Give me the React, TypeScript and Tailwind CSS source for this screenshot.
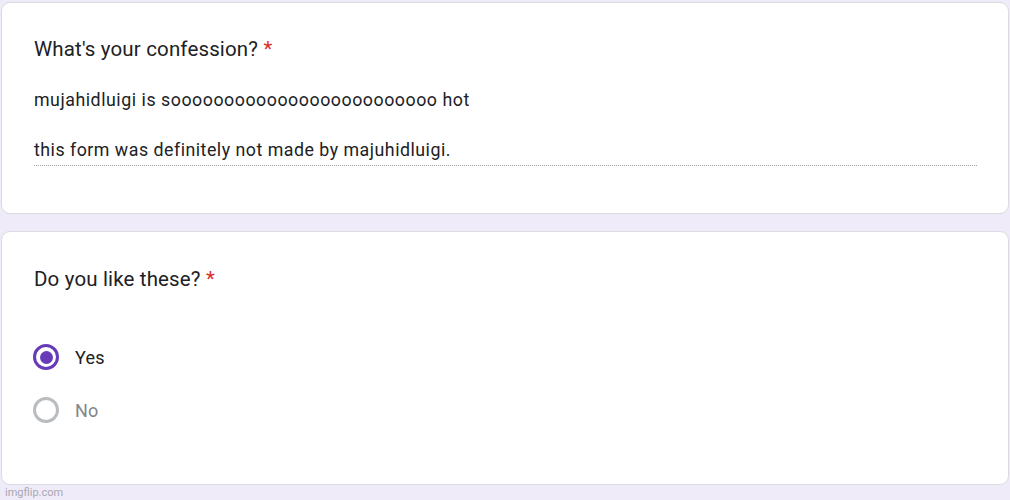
import React from "react";

export default function App() {
  return (
    <div
      className="w-[1010px] h-[500px] bg-[#f0ebf8] overflow-hidden flex flex-col pt-[2px] pl-[1px] pr-[1px]"
      style={{ fontFamily: "Roboto, 'Liberation Sans', sans-serif" }}
    >
      <div className="h-[212px] bg-white rounded-[9px] border border-[#dadce0] flex flex-col pl-[32px] pr-[31px] pt-[34px]">
        <div className="text-[20.5px] leading-[24px] text-[#202124] tracking-[0.15px]">
          What's your confession? <span className="text-[#d93025]">*</span>
        </div>
        <div className="mt-[28px] text-[17.8px] leading-[22px] text-[#202124] tracking-[0.53px]">
          mujahidluigi is sooooooooooooooooooooooooo hot
        </div>
        <div className="mt-[28px] text-[17.8px] leading-[22px] text-[#202124] tracking-[0.5px] pb-[4px] border-b border-dotted border-[#a0a0a0]">
          this form was definitely not made by majuhidluigi.
        </div>
      </div>
      <div className="mt-[17px] h-[254px] bg-white rounded-[9px] border border-[#dadce0] flex flex-col pl-[31px] pt-[35px]">
        <div className="pl-[1px] text-[20.5px] leading-[24px] text-[#202124] tracking-[0.15px]">
          Do you like these? <span className="text-[#d93025]">*</span>
        </div>
        <div className="mt-[52px] flex items-center gap-[16px] h-[28px]">
          <div className="w-[26px] h-[26px] rounded-full border-[3px] border-[#673ab7] flex items-center justify-center">
            <div className="w-[13px] h-[13px] rounded-full bg-[#673ab7]" />
          </div>
          <span className="text-[18px] text-[#202124] tracking-[0.2px]">Yes</span>
        </div>
        <div className="mt-[25px] flex items-center gap-[16px] h-[28px]">
          <div className="w-[26px] h-[26px] rounded-full border-[3px] border-[#b9bcc0]" />
          <span className="text-[18px] text-[#80868b] tracking-[0.2px]">No</span>
        </div>
      </div>
      <div className="pl-[4px] mt-[1px] text-[11px] leading-[14px] text-[#a8a8b0]">imgflip.com</div>
    </div>
  );
}
